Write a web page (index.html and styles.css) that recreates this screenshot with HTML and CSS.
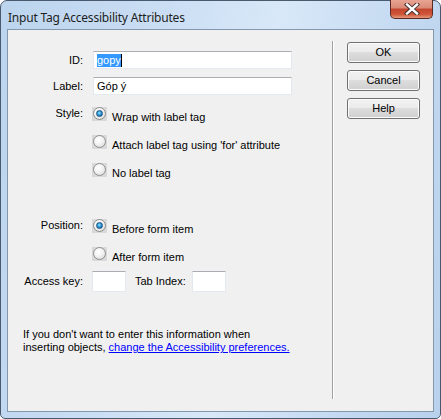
FILE: index.html
```html
<!DOCTYPE html>
<html>
<head>
<meta charset="utf-8">
<link rel="stylesheet" href="styles.css">
</head>
<body>
<div class="window">
  <div class="titlebar">
    <span class="title">Input Tag Accessibility Attributes</span>
    <div class="close">
      <svg width="18" height="12" viewBox="0 0 18 12">
        <path d="M4 1.5 L14 10.5 M14 1.5 L4 10.5" stroke="#3a2a2a" stroke-width="4.2" stroke-linecap="square" fill="none"/>
        <path d="M4 1.5 L14 10.5 M14 1.5 L4 10.5" stroke="#ffffff" stroke-width="2.4" stroke-linecap="square" fill="none"/>
      </svg>
    </div>
  </div>
  <div class="client">
    <div class="form">
      <div class="row field-row r-id">
        <span class="lbl">ID:</span>
        <div class="textbox"><span class="sel">gopy</span><span class="caret"></span></div>
      </div>
      <div class="row field-row r-label">
        <span class="lbl">Label:</span>
        <div class="textbox">Góp ý</div>
      </div>
      <div class="group g-style">
        <div class="row radio-row">
          <span class="lbl">Style:</span>
          <span class="radio on"></span>
          <span class="opt">Wrap with label tag</span>
        </div>
        <div class="row radio-row">
          <span class="lbl"></span>
          <span class="radio"></span>
          <span class="opt">Attach label tag using 'for' attribute</span>
        </div>
        <div class="row radio-row">
          <span class="lbl"></span>
          <span class="radio"></span>
          <span class="opt">No label tag</span>
        </div>
      </div>
      <div class="group g-pos">
        <div class="row radio-row">
          <span class="lbl">Position:</span>
          <span class="radio on"></span>
          <span class="opt">Before form item</span>
        </div>
        <div class="row radio-row">
          <span class="lbl"></span>
          <span class="radio"></span>
          <span class="opt">After form item</span>
        </div>
      </div>
      <div class="row field-row r-keys">
        <span class="lbl">Access key:</span>
        <div class="textbox small"></div>
        <span class="lbl2">Tab Index:</span>
        <div class="textbox small tight"></div>
      </div>
      <p class="note">If you don't want to enter this information when<br>inserting objects, <a class="link" href="#">change the Accessibility preferences.</a></p>
    </div>
    <div class="sep"></div>
    <div class="buttons">
      <div class="btn">OK</div>
      <div class="btn">Cancel</div>
      <div class="btn">Help</div>
    </div>
  </div>
</div>
</body>
</html>
```

FILE: styles.css
```css
html, body {
  margin: 0;
  padding: 0;
  width: 441px;
  height: 419px;
  overflow: hidden;
  background: #ffffff;
}
.window {
  box-sizing: border-box;
  width: 441px;
  height: 419px;
  border: 1px solid #4a5a6e;
  border-radius: 7px 7px 5px 5px;
  background: linear-gradient(100deg, #bcd4ee 0%, #c9ddf3 30%, #d8e8f8 55%, #c4d9f1 80%, #b9d1ec 100%);
  padding: 0 6px 6px 6px;
  position: relative;
  display: flex;
  flex-direction: column;
}
.titlebar {
  height: 28px;
  display: flex;
  align-items: center;
  font-family: "Noto Sans", "Open Sans", sans-serif;
  font-size: 12px;
  color: #1e1e1e;
}
.title {
  padding-left: 1px;
  padding-top: 5px;
  letter-spacing: -0.2px;
}
.close {
  position: absolute;
  top: -1px;
  right: 7px;
  width: 43px;
  height: 19px;
  box-sizing: border-box;
  border: 1px solid #5b2a22;
  border-top: none;
  border-radius: 0 0 5px 5px;
  background: linear-gradient(#e8a493 0%, #d98a76 45%, #c2442c 50%, #d0573a 80%, #e59a7c 100%);
  display: flex;
  align-items: center;
  justify-content: center;
}
.client {
  flex: 1;
  border: 1px solid #8397ad;
  background: #f0f0f0;
  display: flex;
  font-family: "Liberation Sans", Arial, sans-serif;
  font-size: 11px;
  color: #000;
}
.form {
  width: 324px;
  padding-top: 21px;
  display: flex;
  flex-direction: column;
}
.row {
  display: flex;
}
.lbl {
  width: 75px;
  text-align: right;
  flex: none;
  line-height: 13px;
}
.field-row {
  align-items: center;
  height: 18px;
}
.r-label { margin-top: 8px; }
.textbox {
  box-sizing: border-box;
  margin-left: 10px;
  width: 199px;
  height: 18px;
  background: #fff;
  border: 1px solid #e3e9ef;
  border-top-color: #abadb3;
  padding: 2px 0 0 3px;
  line-height: 13px;
  display: flex;
  align-items: flex-start;
}
.sel {
  background: #3399ff;
  color: #fff;
}
.caret {
  width: 1px;
  height: 13px;
  background: #000;
}
.group { display: flex; flex-direction: column; }
.g-style { margin-top: 12px; }
.g-pos { margin-top: 28px; }
.radio-row {
  height: 24px;
  margin-bottom: 4px;
}
.g-pos .radio-row:last-child { margin-bottom: 0; }
.radio {
  flex: none;
  margin-left: 9px;
  width: 15px;
  height: 14px;
  background: #d9d9d9;
  position: relative;
}
.radio::before {
  content: "";
  position: absolute;
  left: 1px;
  top: 0;
  width: 11px;
  height: 11px;
  border-radius: 50%;
  border: 1px solid #8e8f8f;
  background: radial-gradient(circle at 40% 35%, #ffffff 0%, #f4f4f4 40%, #d4d4d4 100%);
}
.radio.on::after {
  content: "";
  position: absolute;
  left: 4px;
  top: 3px;
  width: 5px;
  height: 5px;
  border-radius: 50%;
  border: 1px solid #1d4f78;
  background: radial-gradient(circle at 45% 40%, #9ee4ff 0%, #2f9be0 45%, #0b4c86 100%);
}
.opt {
  padding-left: 5px;
  padding-top: 4px;
  line-height: 13px;
}
.r-keys {
  height: 21px;
}
.textbox.small {
  width: 34px;
  height: 21px;
  margin-left: 9px;
}
.textbox.small.tight {
  margin-left: 0;
}
.lbl2 {
  margin-left: 9px;
  width: 57px;
  line-height: 13px;
}
.note {
  margin: 36px 0 0 15px;
  line-height: 13px;
}
.link {
  color: #0000ff;
  text-decoration: underline;
}
.sep {
  width: 1px;
  background: #a0a0a0;
  margin: 11px 0 12px 0;
  border-right: 1px solid #ffffff;
}
.buttons {
  margin-left: 13px;
  padding-top: 12px;
  display: flex;
  flex-direction: column;
  gap: 7px;
}
.btn {
  box-sizing: border-box;
  width: 73px;
  height: 21px;
  border: 1px solid #707070;
  border-radius: 3px;
  background: linear-gradient(#f2f2f2 0%, #ebebeb 49%, #dddddd 50%, #cfcfcf 100%);
  box-shadow: inset 0 0 0 1px #fcfcfc;
  display: flex;
  align-items: center;
  justify-content: center;
  line-height: 13px;
}
```
